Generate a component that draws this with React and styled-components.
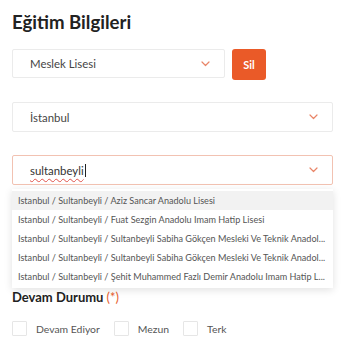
import styled, { createGlobalStyle } from "styled-components";

const GlobalStyle = createGlobalStyle`
  body {
    margin: 0;
    background: #ffffff;
    font-family: "Lato", "Open Sans", sans-serif;
  }
`;

const Page = styled.div`
  width: 350px;
  height: 350px;
  padding: 11px 17px 0 12px;
  box-sizing: border-box;
  overflow: hidden;
`;

const Title = styled.h1`
  margin: 0;
  font-size: 18.6px;
  line-height: 22px;
  font-weight: 700;
  color: #222222;
`;

const TypeRow = styled.div`
  display: flex;
  align-items: flex-start;
  gap: 7px;
  margin-top: 16px;
`;

const Field = styled.div`
  position: relative;
  display: flex;
  align-items: center;
  justify-content: space-between;
  width: ${(p) => p.$width || "100%"};
  height: ${(p) => p.$height || 30}px;
  margin-top: ${(p) => p.$top || 0}px;
  padding: 0 14px 0 17px;
  box-sizing: border-box;
  border: 1px solid ${(p) => (p.$active ? "#f2c2b2" : "#ebebeb")};
  border-radius: 2px;
  background: #ffffff;
  font-size: 11.4px;
  color: #454545;
`;

const Typed = styled.span`
  color: #333333;
  text-decoration: underline wavy #e0524a;
  text-decoration-thickness: 1px;
  text-underline-offset: 3px;
`;

const Caret = styled.span`
  display: inline-block;
  width: 1px;
  height: 13px;
  margin-left: 1px;
  vertical-align: -2px;
  background: #222222;
`;

const DeleteButton = styled.button`
  width: 34px;
  height: 31px;
  border: none;
  border-radius: 3px;
  background: #ea5a28;
  color: #ffffff;
  font-family: inherit;
  font-size: 11px;
  font-weight: 700;
  padding: 0;
`;

const Menu = styled.ul`
  position: absolute;
  left: -1px;
  right: -1px;
  top: 33px;
  margin: 0;
  padding: 2px 0 2px;
  list-style: none;
  background: #ffffff;
  box-shadow: 0 2px 8px rgba(0, 0, 0, 0.12);
  z-index: 2;
`;

const Option = styled.li`
  height: 19px;
  line-height: 19px;
  padding: 0 6px;
  font-size: 9.1px;
  color: #555555;
  white-space: nowrap;
  background: ${(p) => (p.$hover ? "#f2f2f2" : "transparent")};
`;

const SectionTitle = styled.h2`
  margin: 103px 0 0;
  font-size: 13px;
  line-height: 18px;
  font-weight: 700;
  color: #222222;
`;

const Required = styled.span`
  color: #e8602f;
  font-weight: 400;
`;

const Choices = styled.div`
  display: flex;
  align-items: center;
  margin-top: 15px;
`;

const Choice = styled.label`
  display: flex;
  align-items: center;
  gap: 9px;
  margin-right: 14px;
  font-size: 10.4px;
  color: #555555;
`;

const Box = styled.span`
  width: 13px;
  height: 13px;
  border: 1px solid #e6e6e6;
  border-radius: 1px;
`;

const Chevron = () => (
  <svg width="9" height="6" viewBox="0 0 9 6" fill="none">
    <path d="M1 1l3.5 3.5L8 1" stroke="#e98567" strokeWidth="1.2" strokeLinecap="round" strokeLinejoin="round" />
  </svg>
);

const schools = [
  "Istanbul / Sultanbeyli / Aziz Sancar Anadolu Lisesi",
  "Istanbul / Sultanbeyli / Fuat Sezgin Anadolu Imam Hatip Lisesi",
  "Istanbul / Sultanbeyli / Sultanbeyli Sabiha Gökçen Mesleki Ve Teknik Anadol...",
  "Istanbul / Sultanbeyli / Sultanbeyli Sabiha Gökçen Mesleki Ve Teknik Anadol...",
  "Istanbul / Sultanbeyli / Şehit Muhammed Fazlı Demir Anadolu Imam Hatip L...",
];

export default function App() {
  return (
    <>
      <GlobalStyle />
      <Page>
        <Title>Eğitim Bilgileri</Title>
        <TypeRow>
          <Field $width="213px" $height={29}>
            <span>Meslek Lisesi</span>
            <Chevron />
          </Field>
          <DeleteButton>Sil</DeleteButton>
        </TypeRow>
        <Field $top={22}>
          <span>İstanbul</span>
          <Chevron />
        </Field>
        <Field $top={23} $active>
          <span>
            <Typed>sultanbeyli</Typed>
            <Caret />
          </span>
          <Chevron />
          <Menu>
            {schools.map((s, i) => (
              <Option key={i} $hover={i === 0}>{s}</Option>
            ))}
          </Menu>
        </Field>
        <SectionTitle>
          Devam Durumu <Required>(*)</Required>
        </SectionTitle>
        <Choices>
          <Choice><Box />Devam Ediyor</Choice>
          <Choice><Box />Mezun</Choice>
          <Choice><Box />Terk</Choice>
        </Choices>
      </Page>
    </>
  );
}
